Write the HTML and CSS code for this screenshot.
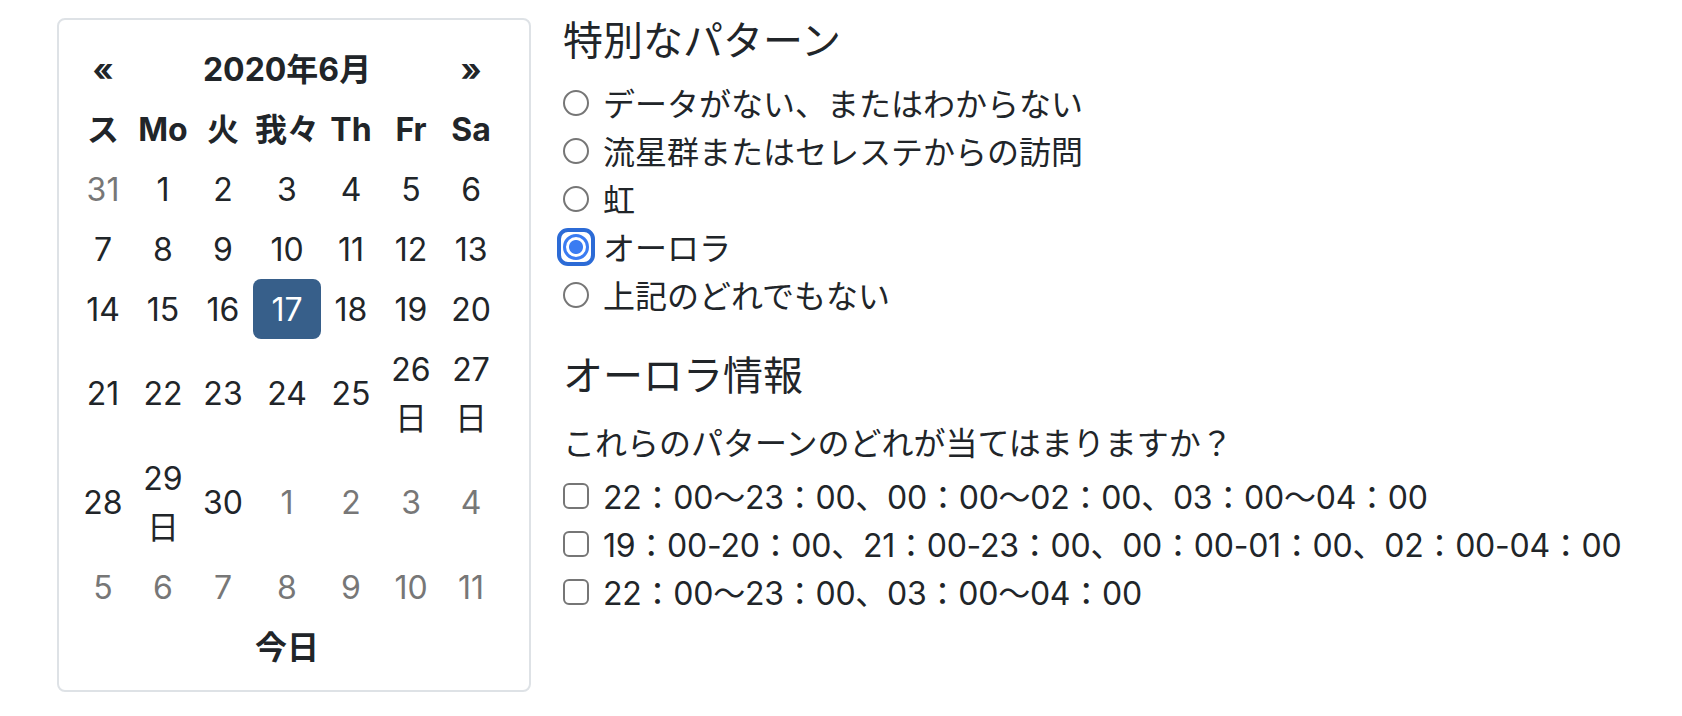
FILE: index.html
```html
<!DOCTYPE html>
<html lang="ja">
<head>
  <meta charset="UTF-8">
  <title>オーロラ報告</title>

  <link rel="stylesheet" href="styles.css">
</head>
<body>
  <div class="page">

    <div class="calendar-card">
      <table class="calendar">
        <colgroup>
          <col class="col-day"><col class="col-day"><col class="col-day"><col class="col-wide"><col class="col-day"><col class="col-day"><col class="col-day">
        </colgroup>
        <thead>
          <tr>
            <th class="nav">«</th>
            <th class="nav" colspan="5">2020年6月</th>
            <th class="nav">»</th>
          </tr>
          <tr>
            <th>ス</th><th>Mo</th><th>火</th><th>我々</th><th>Th</th><th>Fr</th><th>Sa</th>
          </tr>
        </thead>
        <tbody>
          <tr>
            <td class="old">31</td><td>1</td><td>2</td><td>3</td><td>4</td><td>5</td><td>6</td>
          </tr>
          <tr>
            <td>7</td><td>8</td><td>9</td><td>10</td><td>11</td><td>12</td><td>13</td>
          </tr>
          <tr>
            <td>14</td><td>15</td><td>16</td><td class="active">17</td><td>18</td><td>19</td><td>20</td>
          </tr>
          <tr>
            <td>21</td><td>22</td><td>23</td><td>24</td><td>25</td><td>26日</td><td>27日</td>
          </tr>
          <tr>
            <td>28</td><td>29日</td><td>30</td><td class="new">1</td><td class="new">2</td><td class="new">3</td><td class="new">4</td>
          </tr>
          <tr>
            <td class="new">5</td><td class="new">6</td><td class="new">7</td><td class="new">8</td><td class="new">9</td><td class="new">10</td><td class="new">11</td>
          </tr>
        </tbody>
        <tfoot>
          <tr>
            <th colspan="7">今日</th>
          </tr>
        </tfoot>
      </table>
    </div>

    <div class="form-side">
      <h5 class="section-title">特別なパターン</h5>
      <div class="form-group">
        <label class="form-check"><span class="radio"></span>データがない、またはわからない</label>
        <label class="form-check"><span class="radio"></span>流星群またはセレステからの訪問</label>
        <label class="form-check"><span class="radio"></span>虹</label>
        <label class="form-check"><span class="radio checked"></span>オーロラ</label>
        <label class="form-check"><span class="radio"></span>上記のどれでもない</label>
      </div>

      <h5 class="section-title aurora-title">オーロラ情報</h5>
      <p class="question">これらのパターンのどれが当てはまりますか？</p>
      <label class="form-check time-check"><span class="checkbox"></span>22：00〜23：00、00：00〜02：00、03：00〜04：00</label>
      <label class="form-check time-check"><span class="checkbox"></span>19：00-20：00、21：00-23：00、00：00-01：00、02：00-04：00</label>
      <label class="form-check time-check"><span class="checkbox"></span>22：00〜23：00、03：00〜04：00</label>
    </div>

  </div>
</body>
</html>
```

FILE: styles.css
```css
body {
  margin: 0;
  font-family: Inter, "Noto Sans CJK JP", sans-serif;
  font-size: 32px;
  line-height: 48px;
  color: #212529;
  background-color: #fff;
}

.page {
  display: flex;
  align-items: flex-start;
  gap: 32px;
  padding: 18px 0 0 57px;
}

/* calendar */

.calendar-card {
  width: 474px;
  box-sizing: border-box;
  border: 2px solid #dee2e6;
  border-radius: 8px;
  padding: 19px 0 13px 14px;
}

.calendar {
  width: 428px;
  table-layout: fixed;
  border-collapse: separate;
  border-spacing: 0;
}

.col-day {
  width: 60px;
}

.col-wide {
  width: 68px;
}

.calendar th,
.calendar td {
  padding: 5.5px 0;
  line-height: 49px;
  text-align: center;
  font-weight: normal;
}

.calendar th {
  font-weight: bold;
}

.calendar td.old,
.calendar td.new {
  color: #777;
}

.calendar td.active {
  background-color: #375f8a;
  color: #fff;
  border-radius: 8px;
}

/* form */

.section-title {
  margin: 0 0 18px;
  font-size: 40px;
  font-weight: normal;
  line-height: 45px;
}

.form-group {
  margin-bottom: 32px;
}

.aurora-title {
  margin-bottom: 22px;
}

.question {
  margin: 0 0 6px;
}

.form-check {
  display: flex;
  align-items: center;
}

.time-check {
  letter-spacing: -0.25px;
}

.radio,
.checkbox {
  flex: none;
  width: 26px;
  height: 26px;
  box-sizing: border-box;
  margin: -4px 14px 0 0;
  border: 2px solid #767676;
  background-color: #fff;
}

.radio {
  position: relative;
  border-radius: 50%;
}

.checkbox {
  border-radius: 6px;
}

.radio.checked {
  border: 3px solid #3b7cf2;
  background: radial-gradient(circle, #3b7cf2 0 6.5px, #fff 7.5px);
}

.radio.checked::before {
  content: "";
  position: absolute;
  inset: -9px;
  border: 4px solid #2c6bd6;
  border-radius: 11px;
}
```
